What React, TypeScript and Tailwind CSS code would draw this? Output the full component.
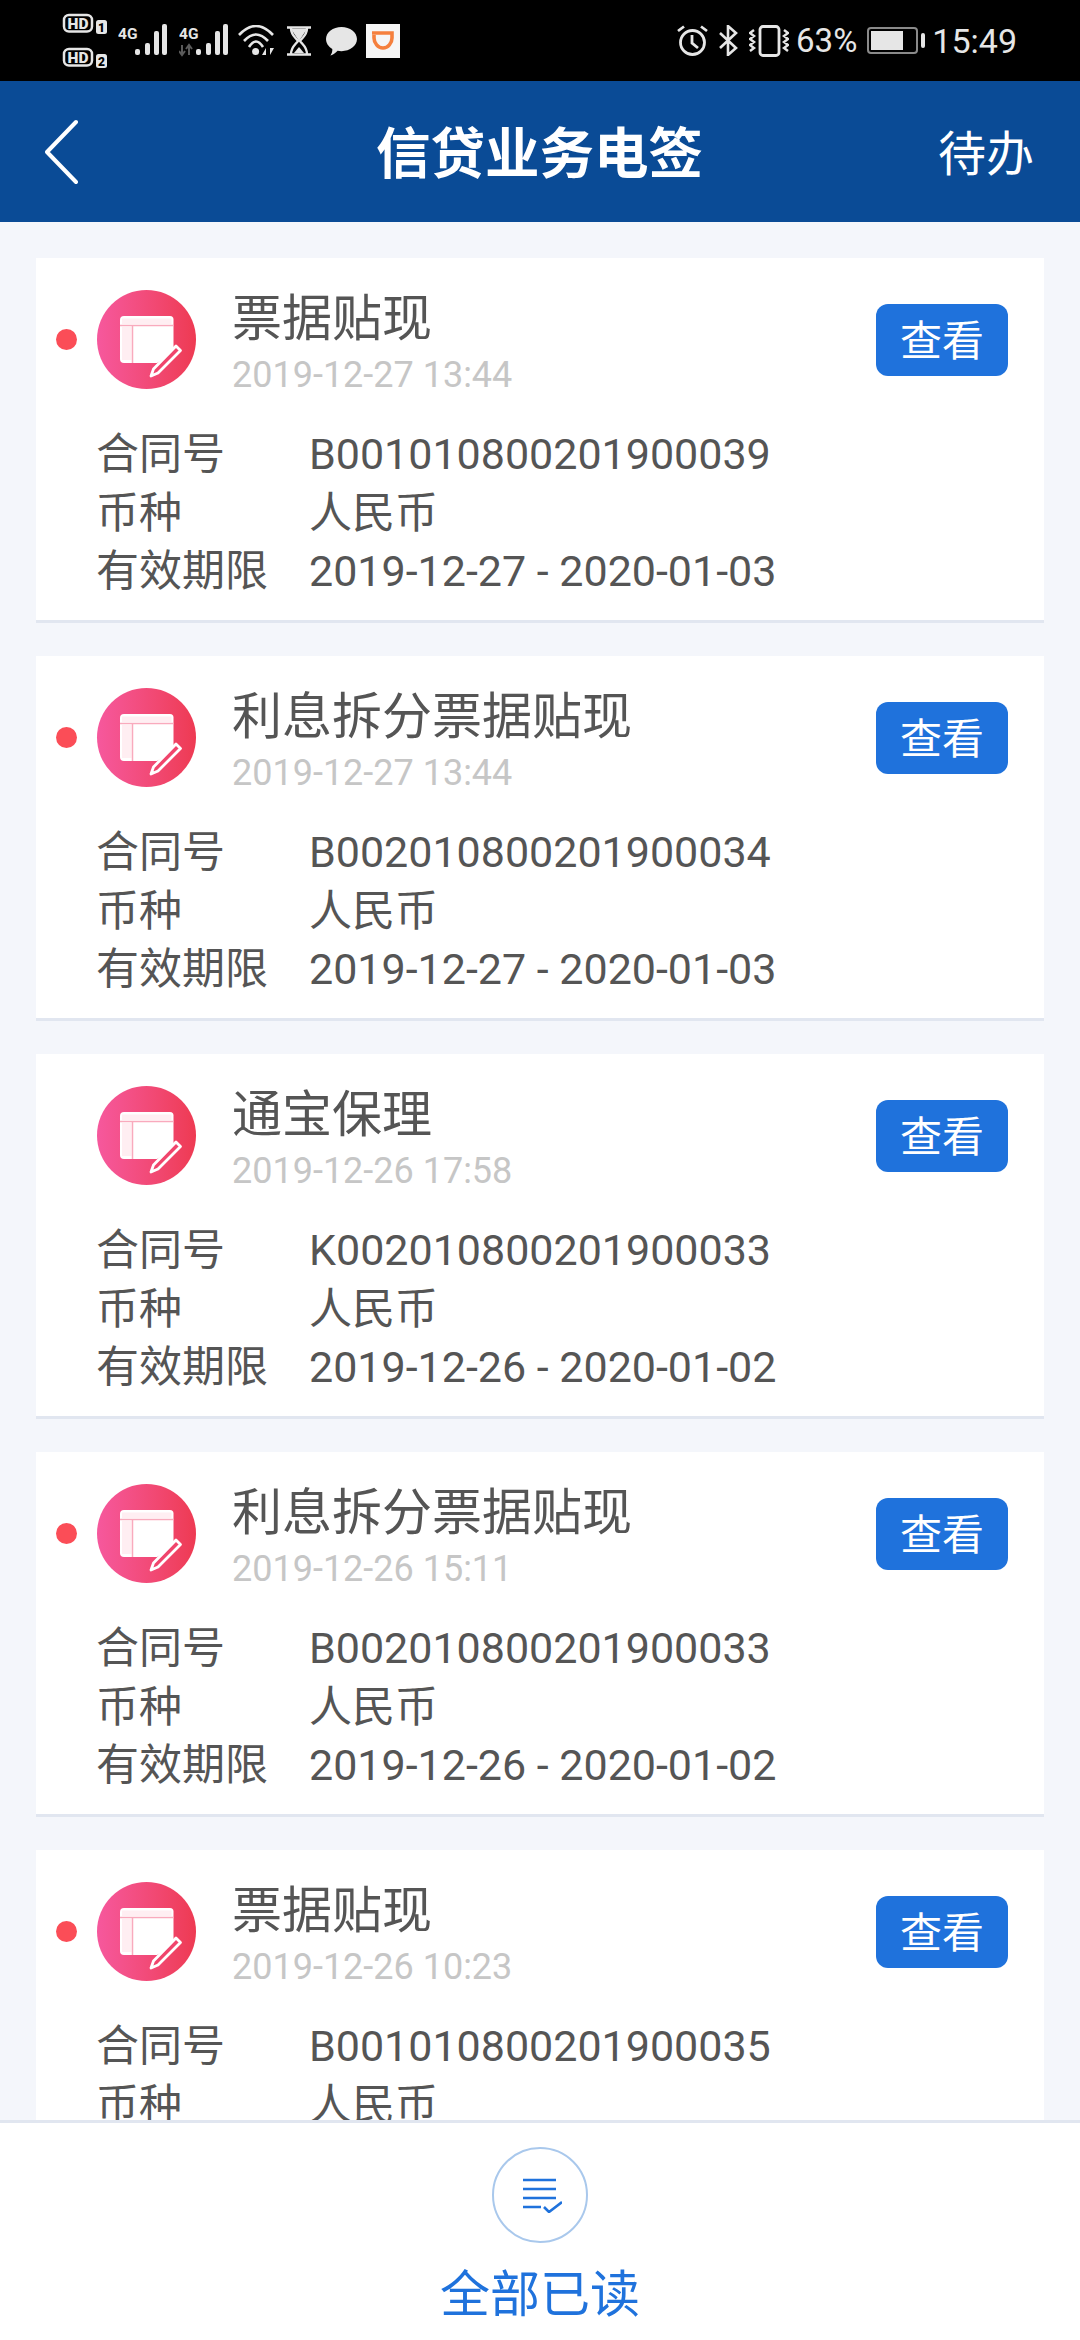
import React from 'react';

const records = [
  { title: '票据贴现', date: '2019-12-27 13:44', contract: 'B001010800201900039', range: '2019-12-27 - 2020-01-03', unread: true },
  { title: '利息拆分票据贴现', date: '2019-12-27 13:44', contract: 'B002010800201900034', range: '2019-12-27 - 2020-01-03', unread: true },
  { title: '通宝保理', date: '2019-12-26 17:58', contract: 'K002010800201900033', range: '2019-12-26 - 2020-01-02', unread: false },
  { title: '利息拆分票据贴现', date: '2019-12-26 15:11', contract: 'B002010800201900033', range: '2019-12-26 - 2020-01-02', unread: true },
  { title: '票据贴现', date: '2019-12-26 10:23', contract: 'B001010800201900035', range: '2019-12-26 - 2020-01-02', unread: true },
];

const HdBadge = ({ n }: { n: string }) => (
  <svg width="45" height="21" viewBox="0 0 45 21" className="block">
    <rect x="2" y="2" width="28" height="16.500" rx="5" fill="none" stroke="#e6e6e6" strokeWidth="2.500" />
    <text x="16" y="16" textAnchor="middle" fontSize="15.500" fontWeight="900" fill="#e6e6e6" fontFamily="Roboto">HD</text>
    <rect x="34" y="7" width="11" height="14" rx="2.500" fill="#e6e6e6" />
    <text x="39.500" y="18.500" textAnchor="middle" fontSize="12" fontWeight="900" fill="#000" fontFamily="Roboto">{n}</text>
  </svg>
);

const Signal = ({ arrows }: { arrows?: boolean }) => (
  <svg width="50" height="33" viewBox="0 0 50 33" className="block">
    <text x="0" y="14.500" fontSize="15.500" fontWeight="700" fill="#e6e6e6" fontFamily="Roboto">4G</text>
    {arrows && <path d="M3 21v10M0 27l3 4 3-4M10 31V21M7 25l3-4 3 4" stroke="#5a5a5a" strokeWidth="2" fill="none" />}
    <rect x="17" y="25" width="5" height="6" rx="2" fill="#e6e6e6" />
    <rect x="27" y="19" width="5" height="12" rx="2" fill="#e6e6e6" />
    <rect x="36" y="7" width="5" height="24" rx="2" fill="#e6e6e6" />
    <rect x="44" y="0" width="5" height="31" rx="2" fill="#e6e6e6" />
  </svg>
);

const Wifi = () => (
  <svg width="36" height="31" viewBox="0 0 36 31" fill="none" stroke="#e6e6e6" strokeWidth="2.600" className="block">
    <path d="M1 10Q18-8 35 10M6 16Q18 3 30 16M11 22Q18 11 25 22" />
    <circle cx="17.600" cy="26.600" r="3.500" fill="#e6e6e6" stroke="none" />
    <path d="M28 30v-7l-4 7zM32 23v7l4-7z" fill="#e6e6e6" stroke="none" />
  </svg>
);

const Hourglass = () => (
  <svg width="24" height="30" viewBox="0 0 24 30" className="block" fill="none" stroke="#e6e6e6" strokeWidth="2.400">
    <path d="M0 1.500h24M0 28.500h24" />
    <path d="M4 2c0 7 4 9 7 13-3 4-7 6-7 13M20 2c0 7-4 9-7 13 3 4 7 6 7 13" />
    <path d="M4 3h16l-8 12z" fill="#e6e6e6" stroke="none" />
    <path d="M7 27l5-6 5 6z" fill="#e6e6e6" stroke="none" />
  </svg>
);

const Bubble = () => (
  <svg width="31" height="30" viewBox="0 0 32 31" className="block">
    <path d="M16 1c8.800 0 16 5.500 16 12.500S24.800 26 16 26c-1.500 0-2.800-.2-4-.4C9.500 28.500 6.500 30 4.500 30.500c1.500-2 2.200-4.300 2-6.800C2.500 21.400 0 17.700 0 13.500 0 6.500 7.200 1 16 1z" fill="#e6e6e6" />
  </svg>
);

const Didi = () => (
  <div className="w-[34px] h-[34px] bg-[#f6f6f6] flex items-center justify-center">
    <svg width="22" height="19" viewBox="0 0 22 19" fill="none" stroke="#f5803e" strokeWidth="3.600" className="block">
      <path d="M0 2h20v5c0 5-4 10-9 10S2 12 2 7V4" />
    </svg>
  </div>
);

const Alarm = () => (
  <svg width="31" height="31" viewBox="0 0 31 31" fill="none" stroke="#e6e6e6" strokeWidth="2.800" className="block">
    <circle cx="15.500" cy="17.500" r="12" />
    <path d="M15 10v8l6 5M1 6l6-4.500M30 6l-6-4.500" />
  </svg>
);

const Bluetooth = () => (
  <svg width="19" height="31" viewBox="0 0 19 31" fill="none" stroke="#e6e6e6" strokeWidth="2.600" className="block">
    <path d="M1 8l16 15-8 7V1l8 7L1 23" />
  </svg>
);

const Vibrate = () => (
  <svg width="40" height="32" viewBox="0 0 40 32" fill="none" stroke="#e6e6e6" className="block">
    <rect x="11" y="1.500" width="19" height="29" rx="3" strokeWidth="2.800" />
    <path d="M5 5L1 8l4 3-4 3 4 3-4 3 4 3-4 3M35 5l4 3-4 3 4 3-4 3 4 3-4 3 4 3" strokeWidth="2.400" />
  </svg>
);

const Battery = () => (
  <div className="flex items-center gap-[3px]">
    <div className="w-[51px] h-[27px] rounded-[4px] border-2 border-[#8a8a8a] p-[2px] flex">
      <div className="w-[32px] bg-[#e6e6e6]" />
    </div>
    <div className="w-[4px] h-[15px] rounded-[2px] bg-[#e6e6e6]" />
  </div>
);

const DocIcon = () => (
  <div className="w-[99px] h-[99px] shrink-0 rounded-full bg-gradient-to-r from-[#f6589d] to-[#ee3a52]">
    <svg width="99" height="99" viewBox="0 0 99 99" className="block">
      <path d="M27 26h46a3.500 3.500 0 0 1 3.500 3.500V63L60 73H27a4 4 0 0 1-4-4V30a4 4 0 0 1 4-4z" fill="#fff" />
      <path d="M25 28.500h49.500V34H25zM25 37h9.500v33H25z" fill="#ffeef2" />
      <path d="M23 35.500h53.500M35.500 36v37" stroke="#f9aabd" strokeWidth="1.500" />
      <path d="M79 56l4.500 4.500L61 83l-7 3 2.500-7z" fill="#f0456c" stroke="#fff" strokeWidth="2.800" strokeLinejoin="round" />
    </svg>
  </div>
);

const Row = ({ label, value }: { label: string; value: string }) => (
  <div className="flex h-[58.500px] items-center text-[43px] text-[#555555]">
    <div className="w-[213px] shrink-0">{label}</div>
    <div>{value}</div>
  </div>
);

const Card = ({ item }: { item: (typeof records)[number] }) => (
  <div className="h-[365px] shrink-0 bg-white border-b-[3px] border-[#e1e6f0] pt-[32px] pl-[20px] pr-[36px]">
    <div className="flex items-start">
      <div className={`w-[21px] h-[21px] rounded-full mt-[39px] mr-[20px] shrink-0 ${item.unread ? 'bg-[#fb4d57]' : ''}`} />
      <DocIcon />
      <div className="ml-[36px] flex-1">
        <div className="text-[50px] leading-[56px] mt-[1px] text-[#555555]">{item.title}</div>
        <div className="text-[36px] leading-[40px] mt-[8px] text-[#c6c6c6]">{item.date}</div>
      </div>
      <button className="w-[132px] h-[72px] mt-[14px] pt-[3px] rounded-[12px] bg-[#1f72dc] text-white text-[42px]">查看</button>
    </div>
    <div className="ml-[40px] mt-[30px]">
      <Row label="合同号" value={item.contract} />
      <Row label="币种" value="人民币" />
      <Row label="有效期限" value={item.range} />
    </div>
  </div>
);

export default function App() {
  return (
    <div className="w-[1080px] h-[2340px] flex flex-col overflow-hidden bg-[#f4f6fb] font-['Roboto','Noto_Sans_CJK_SC',sans-serif]">
      <div className="h-[81px] shrink-0 bg-black flex items-center pl-[62px] pr-[63px] text-[#e6e6e6]">
        <div className="flex flex-col gap-[13px]">
          <HdBadge n="1" />
          <HdBadge n="2" />
        </div>
        <div className="ml-[11px] flex items-center gap-[11px]">
          <Signal />
          <Signal arrows />
        </div>
        <div className="ml-[9px]"><Wifi /></div>
        <div className="ml-[13px]"><Hourglass /></div>
        <div className="ml-[15px]"><Bubble /></div>
        <div className="ml-[9px]"><Didi /></div>
        <div className="ml-auto flex items-center">
          <Alarm />
          <div className="ml-[11px]"><Bluetooth /></div>
          <div className="ml-[11px]"><Vibrate /></div>
          <div className="ml-[7px] text-[33px] leading-none">63%</div>
          <div className="ml-[10px]"><Battery /></div>
          <div className="ml-[7px] text-[34px] leading-none">15:49</div>
        </div>
      </div>

      <div className="h-[141px] shrink-0 bg-[#0a4b96] flex items-center pl-[45px] pr-[46px] pt-[6px]">
        <div className="w-[190px] -mt-[5px]">
          <svg width="33" height="66" viewBox="0 0 33 66" fill="none" stroke="#fff" strokeWidth="4" strokeLinecap="round" strokeLinejoin="round" className="block">
            <path d="M31 3L2 33l29 30" />
          </svg>
        </div>
        <div className="flex-1 text-center text-[54.500px] font-bold text-white">信贷业务电签</div>
        <div className="w-[190px] text-right text-[48px] text-white">待办</div>
      </div>

      <div className="flex-1 min-h-0 overflow-hidden flex flex-col gap-[33px] px-[36px] pt-[36px]">
        {records.map((item) => (
          <Card key={item.contract} item={item} />
        ))}
      </div>

      <div className="h-[220px] shrink-0 bg-white border-t-[3px] border-[#e1e6f0] flex flex-col items-center pt-[24px]">
        <div className="w-[96px] h-[96px] rounded-full border-2 border-[#a9c8ec] flex items-center justify-center">
          <svg width="44" height="36" viewBox="0 0 44 36" fill="none" stroke="#1f72dc" strokeWidth="2.600" className="block">
            <path d="M5 3h33M5 12h33M5 21h33M5 30h18M26 30l5 5 13-10" />
          </svg>
        </div>
        <div className="text-[50px] leading-[60px] mt-[22px] text-[#1f72dc]">全部已读</div>
      </div>
    </div>
  );
}
